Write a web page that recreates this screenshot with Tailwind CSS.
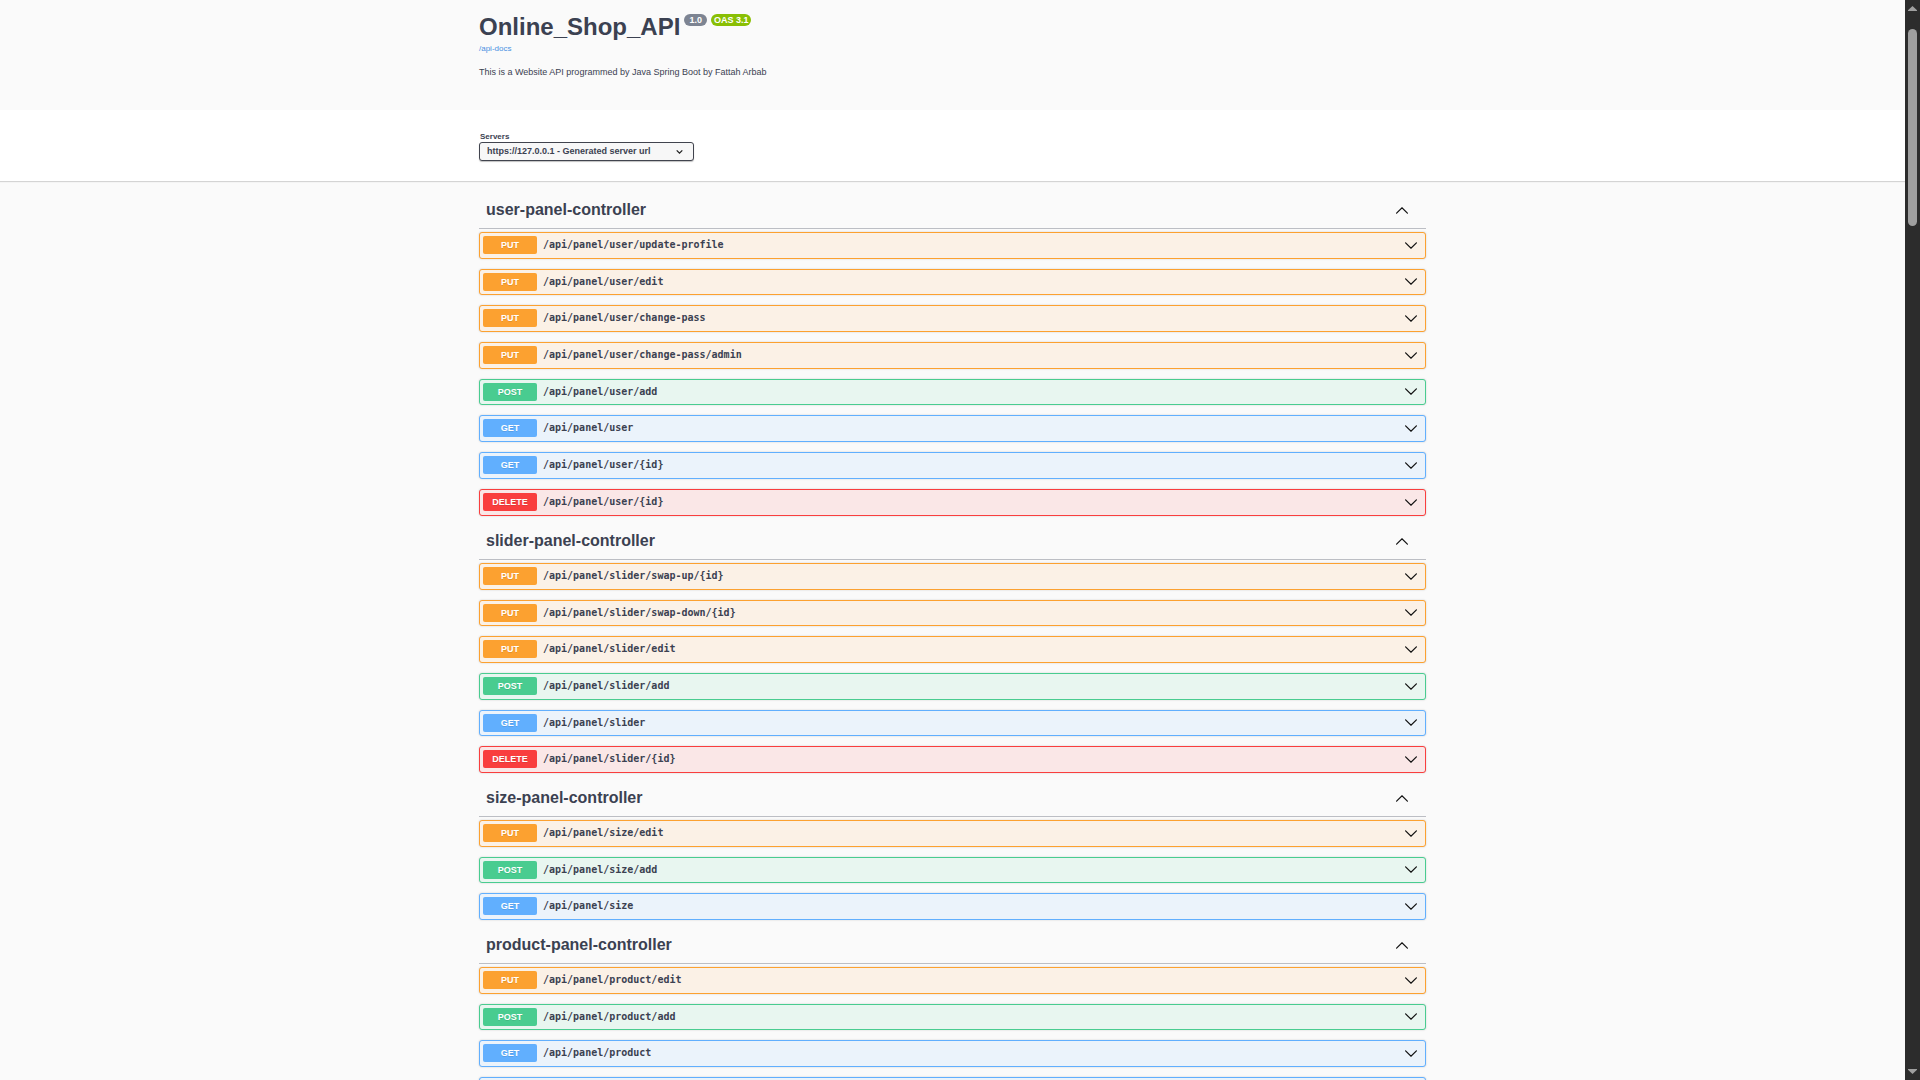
<!DOCTYPE html>
<html lang="en">
<head>
<meta charset="utf-8">
<meta name="viewport" content="width=device-width, initial-scale=1">
<title>Online_Shop_API</title>
<script src="https://cdn.jsdelivr.net/npm/@tailwindcss/browser@4"></script>
</head>
<body class="flex h-screen overflow-hidden bg-[#fafafa] font-['Liberation_Sans',Arial,sans-serif] text-[#3b4151]">
<div class="min-w-0 flex-1 overflow-hidden">
  <header class="mx-auto w-full max-w-[973px] px-[13px] pt-[13px] pb-8">
    <div class="flex items-start gap-1">
      <h1 class="text-2xl leading-7 font-bold">Online_Shop_API</h1>
      <span class="mt-px rounded-full bg-[#7d8492] px-[5px] text-[9px] leading-3 font-bold text-white">1.0</span>
      <span class="mt-px rounded-full bg-[#89bf04] px-[3px] text-[9px] leading-3 font-bold text-white">OAS 3.1</span>
    </div>
    <a href="#" class="mt-[3px] block w-fit text-[8px] leading-[10px] text-[#4990e2]">/api-docs</a>
    <p class="mt-3 text-[9px] leading-3">This is a Website API programmed by Java Spring Boot by Fattah Arbab</p>
  </header>

  <section class="bg-white pt-[22px] pb-5 shadow-[0_1px_1px_rgba(0,0,0,0.15)]">
    <div class="mx-auto max-w-[973px] px-[13px]">
      <label for="servers" class="block pl-px text-[8px] leading-[10px] font-bold">Servers</label>
      <div class="relative w-[215px]">
        <select id="servers" class="block h-[19px] w-full appearance-none rounded-[3px] border border-[#41444e] bg-[#f7f7f7] pb-[2px] pl-[7px] text-[9px] leading-3 font-bold text-[#3b4151] shadow-[0_1px_1px_rgba(0,0,0,0.25)]">
          <option>https://127.0.0.1 - Generated server url</option>
        </select>
        <svg class="pointer-events-none absolute top-[7px] right-[11px] h-[6px] w-[7px]" viewBox="0 0 7 6" fill="none" stroke="#222" stroke-width="1.3"><path d="M.7 1.4 3.5 4.2 6.3 1.4"/></svg>
      </div>
    </div>
  </section>

  <main id="api" class="mx-auto max-w-[973px] px-[13px] pt-[10px]"></main>
</div>

<div class="flex w-[15px] shrink-0 flex-col items-center bg-[#2c2c2c] py-[6px]" aria-hidden="true">
  <svg class="h-[5px] w-[9px]" viewBox="0 0 9 5" fill="#9f9f9f"><path d="M4.5 0 9 4.2V5H0v-.8z"/></svg>
  <div class="mt-[18px] h-[197px] w-[9px] rounded-full bg-[#9f9f9f]"></div>
  <svg class="mt-auto h-[5px] w-[9px]" viewBox="0 0 9 5" fill="#9f9f9f"><path d="M4.5 5 9 .8V0H0v.8z"/></svg>
</div>

<script>
const methods = {
  PUT: { row: 'border-[#fca130] bg-[#fbf1e6]', badge: 'bg-[#fca130]' },
  POST: { row: 'border-[#49cc90] bg-[#e8f6f0]', badge: 'bg-[#49cc90]' },
  GET: { row: 'border-[#61affe] bg-[#ebf3fb]', badge: 'bg-[#61affe]' },
  DELETE: { row: 'border-[#f93e3e] bg-[#fae7e7]', badge: 'bg-[#f93e3e]' },
};
const groups = [
  ['user-panel-controller', [
    ['PUT', '/api/panel/user/update-profile'], ['PUT', '/api/panel/user/edit'],
    ['PUT', '/api/panel/user/change-pass'], ['PUT', '/api/panel/user/change-pass/admin'],
    ['POST', '/api/panel/user/add'], ['GET', '/api/panel/user'],
    ['GET', '/api/panel/user/{id}'], ['DELETE', '/api/panel/user/{id}']]],
  ['slider-panel-controller', [
    ['PUT', '/api/panel/slider/swap-up/{id}'], ['PUT', '/api/panel/slider/swap-down/{id}'],
    ['PUT', '/api/panel/slider/edit'], ['POST', '/api/panel/slider/add'],
    ['GET', '/api/panel/slider'], ['DELETE', '/api/panel/slider/{id}']]],
  ['size-panel-controller', [
    ['PUT', '/api/panel/size/edit'], ['POST', '/api/panel/size/add'], ['GET', '/api/panel/size']]],
  ['product-panel-controller', [
    ['PUT', '/api/panel/product/edit'], ['POST', '/api/panel/product/add'],
    ['GET', '/api/panel/product'], ['GET', '']]],
];
const chevron = (d) => `<svg class="h-[7px] w-3 shrink-0" viewBox="0 0 12 7" fill="none" stroke="#111" stroke-width="1.2" stroke-linecap="round"><path d="${d}"/></svg>`;
const row = ([method, path]) => `
  <li class="h-[27px] not-last:nth-[3n+2]:h-[26px]">
    <button type="button" class="flex h-full w-full items-center rounded-[3px] border pr-2 pb-px pl-[3px] text-left shadow-[0_0_2px_rgba(0,0,0,0.19)] ${methods[method].row}">
      <span class="h-[18px] w-[54px] rounded-[2px] text-center text-[9px] leading-[18px] font-bold text-white [text-shadow:0_1px_0_rgba(0,0,0,0.1)] ${methods[method].badge}">${path ? method : ''}</span>
      <span class="flex-1 pl-[6px] font-['DejaVu_Sans_Mono',monospace] text-[10px] leading-[14px] font-bold">${path}</span>
      ${chevron('M.6.8 6 6.2 11.4.8')}
    </button>
  </li>`;
document.getElementById('api').innerHTML = groups.map(([name, rows]) => `
  <section>
    <h2><button type="button" class="flex h-[38px] w-full items-center justify-between border-b border-[#bcbec4] pt-px pr-[18px] pl-[7px] text-base font-bold">${name}${chevron('M.6 6.2 6 .8l5.4 5.4')}</button></h2>
    <ul class="flex flex-col gap-[10px] pt-[3px] pb-[6px]">${rows.map(row).join('')}</ul>
  </section>`).join('');
</script>
</body>
</html>
